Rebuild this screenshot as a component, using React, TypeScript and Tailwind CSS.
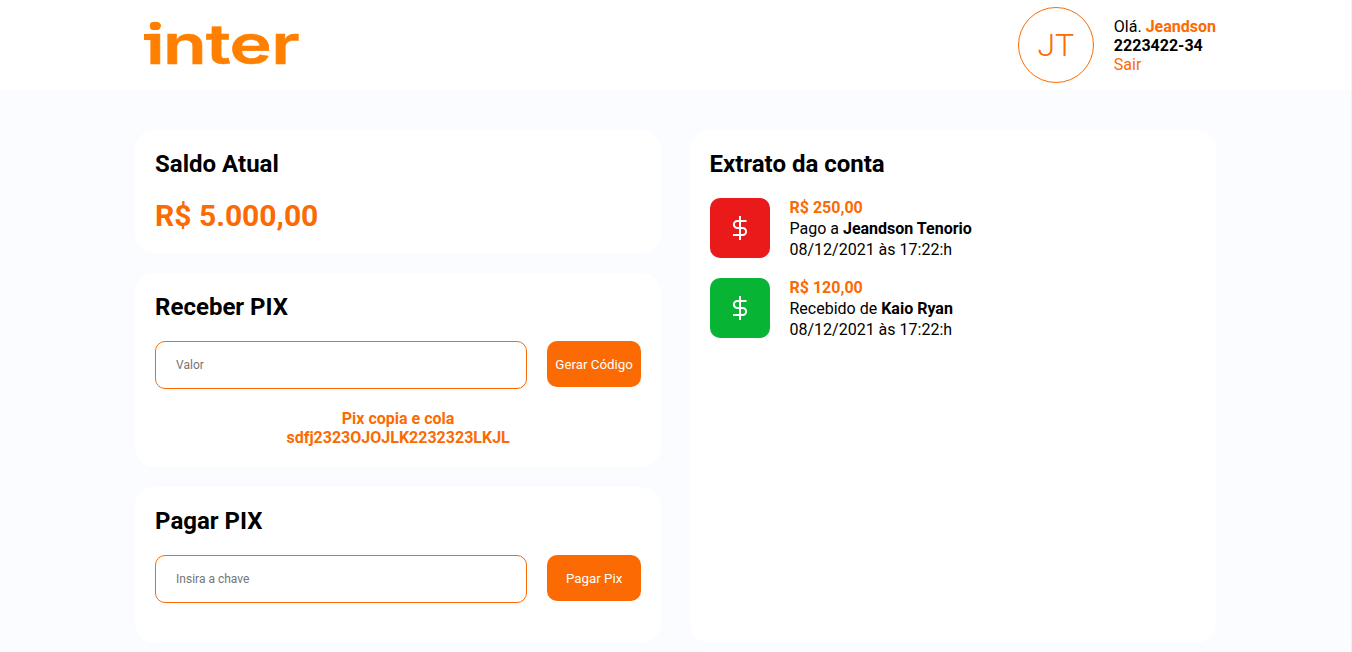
import React from 'react';

function Logo() {
  return (
    <svg width="180" height="90" viewBox="0 0 180 90" className="block" role="img" aria-label="inter">
      <g fill="#ff8000">
        <rect x="9" y="34" width="8" height="6" />
        <rect x="15" y="22" width="10" height="8" rx="3" />
        <text
          transform="scale(1.3 1)"
          x="8.4 21.5 54.5 72.7 104.8"
          y="64"
          fontFamily="Inter, sans-serif"
          fontWeight="600"
          fontSize="55"
          stroke="#ff8000"
          strokeWidth="0.5"
        >
          inter
        </text>
      </g>
    </svg>
  );
}

function Header() {
  return (
    <header className="h-[90px] bg-white">
      <div className="mx-auto flex h-full w-[1081px] items-center justify-between">
        <Logo />
        <div className="flex items-center">
          <div className="mr-5 flex size-[76px] items-center justify-center rounded-full border border-[#fc6a03] text-[32px] font-light text-[#fc6a03]">
            JT
          </div>
          <div className="text-base leading-[19px]">
            <p>
              Olá. <strong className="text-[#fc6a03]">Jeandson</strong>
            </p>
            <p className="font-bold">2223422-34</p>
            <a href="#" className="block text-[#fc6a03]">Sair</a>
          </div>
        </div>
      </div>
    </header>
  );
}

function Card({ title, className, children }: { title: string; className: string; children: React.ReactNode }) {
  return (
    <section className={`rounded-[20px] bg-white px-5 pt-5 ${className}`}>
      <h2 className="text-2xl leading-7 font-bold">{title}</h2>
      {children}
    </section>
  );
}

function PixForm({ placeholder, action }: { placeholder: string; action: string }) {
  return (
    <form className="mt-5 flex items-start justify-between" onSubmit={(e) => e.preventDefault()}>
      <input
        placeholder={placeholder}
        className="h-12 w-[372px] rounded-[10px] border border-[#fc6a03] px-5 text-xs outline-none placeholder:text-[#757575]"
      />
      <button className="h-[46px] w-[94px] rounded-[10px] bg-[#fc6a03] pt-0.5 text-[13.333px] whitespace-nowrap text-white">
        {action}
      </button>
    </form>
  );
}

function Entry({ value, label, name, color }: { value: string; label: string; name: string; color: string }) {
  return (
    <li className="flex h-[60px] gap-5">
      <div className={`flex size-[60px] items-center justify-center rounded-[10px] ${color}`}>
        <svg width="24" height="24" viewBox="0 0 24 24" fill="none" stroke="white" strokeWidth="2">
          <path d="M12 0v24M18.5 5H9.4a3.5 3.5 0 0 0 0 7h5.2a3.5 3.5 0 0 1 0 7H5" />
        </svg>
      </div>
      <div className="-mt-px text-base leading-[21px]">
        <p className="font-bold text-[#fc6a03]">{value}</p>
        <p>
          {label} <strong>{name}</strong>
        </p>
        <p>08/12/2021 às 17:22:h</p>
      </div>
    </li>
  );
}

export default function App() {
  return (
    <div className="h-[652px] overflow-hidden border-r border-[#f0f0f2] bg-[#fbfcff] font-['Roboto',sans-serif] text-black">
      <Header />
      <main className="mx-auto mt-10 flex w-[1080.8px] justify-between">
        <div className="flex w-[526px] flex-col gap-5">
          <Card title="Saldo Atual" className="h-[123px]">
            <p className="mt-5 text-[30px] leading-9 font-bold text-[#fc6a03]">R$ 5.000,00</p>
          </Card>
          <Card title="Receber PIX" className="h-[194px]">
            <PixForm placeholder="Valor" action="Gerar Código" />
            <p className="mt-5 text-center text-base leading-[19px] font-bold text-[#fc6a03]">
              Pix copia e cola
              <br />
              sdfj2323OJOJLK2232323LKJL
            </p>
          </Card>
          <Card title="Pagar PIX" className="h-[156px]">
            <PixForm placeholder="Insira a chave" action="Pagar Pix" />
          </Card>
        </div>
        <Card title="Extrato da conta" className="w-[526.4px]">
          <ul className="mt-5 flex flex-col gap-5">
            <Entry value="R$ 250,00" label="Pago a" name="Jeandson Tenorio" color="bg-[#ea1a1a]" />
            <Entry value="R$ 120,00" label="Recebido de" name="Kaio Ryan" color="bg-[#08b434]" />
          </ul>
        </Card>
      </main>
    </div>
  );
}
